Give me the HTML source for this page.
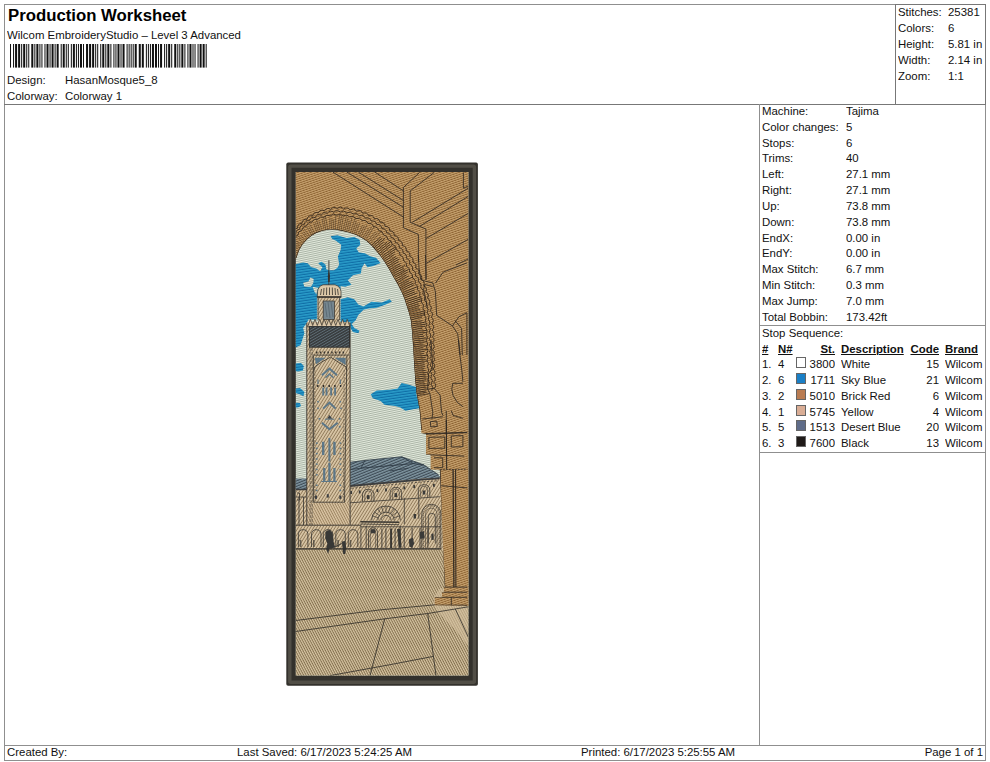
<!DOCTYPE html>
<html><head><meta charset="utf-8"><title>Production Worksheet</title>
<style>
html,body{margin:0;padding:0;background:#fff;}
body{width:990px;height:762px;position:relative;overflow:hidden;font-family:"Liberation Sans",sans-serif;font-size:11px;color:#111;}
.l{position:absolute;background:#8f8f8f;}
.t{position:absolute;white-space:nowrap;line-height:12px;height:12px;transform:scaleX(1.037);transform-origin:0 0;}
.r{text-align:right;transform-origin:100% 0;}
.h1{font-size:16px;font-weight:bold;line-height:18px;height:18px;color:#000;transform:scaleX(1.047);}
.b{font-weight:bold;text-decoration:underline;}
.sw{position:absolute;width:10px;height:11px;margin-top:-1px;border:1px solid #666;box-sizing:border-box;}
</style></head><body>
<!-- frame lines -->
<div class="l" style="left:4px;top:4px;width:982px;height:1px"></div>
<div class="l" style="left:4px;top:4px;width:1px;height:756px"></div>
<div class="l" style="left:985px;top:4px;width:1px;height:756px"></div>
<div class="l" style="left:4px;top:103.5px;width:982px;height:1px;background:#777"></div>
<div class="l" style="left:895px;top:4px;width:1px;height:100px;background:#777"></div>
<div class="l" style="left:895px;top:4px;width:91px;height:1px;background:#777"></div>
<div class="l" style="left:985px;top:4px;width:1px;height:100px;background:#777"></div>
<div class="l" style="left:759px;top:104px;width:1px;height:641px"></div>
<div class="l" style="left:759px;top:325px;width:226px;height:1px"></div>
<div class="l" style="left:759px;top:452px;width:226px;height:1px"></div>
<div class="l" style="left:4px;top:745px;width:982px;height:1px"></div>
<div class="l" style="left:4px;top:759.5px;width:982px;height:1px"></div>

<!-- header -->
<div class="t h1" style="left:8.3px;top:7px">Production Worksheet</div>
<div class="t" style="left:7px;top:29px">Wilcom EmbroideryStudio – Level 3 Advanced</div>
<svg style="position:absolute;left:10.3px;top:44.3px" width="196.7" height="23.6" viewBox="0 0 194 24" preserveAspectRatio="none" fill="#111"><rect x="0" y="0" width="1" height="24"/><rect x="3" y="0" width="1" height="24"/><rect x="5" y="0" width="2" height="24"/><rect x="8" y="0" width="2" height="24"/><rect x="11" y="0" width="1" height="24"/><rect x="13" y="0" width="2" height="24"/><rect x="16" y="0" width="1" height="24"/><rect x="18" y="0" width="1" height="24"/><rect x="21" y="0" width="2" height="24"/><rect x="24" y="0" width="1" height="24"/><rect x="26" y="0" width="2" height="24"/><rect x="29" y="0" width="1" height="24"/><rect x="31" y="0" width="1" height="24"/><rect x="34" y="0" width="1" height="24"/><rect x="36" y="0" width="2" height="24"/><rect x="39" y="0" width="1" height="24"/><rect x="41" y="0" width="2" height="24"/><rect x="44" y="0" width="1" height="24"/><rect x="46" y="0" width="2" height="24"/><rect x="50" y="0" width="1" height="24"/><rect x="52" y="0" width="2" height="24"/><rect x="55" y="0" width="1" height="24"/><rect x="57" y="0" width="1" height="24"/><rect x="60" y="0" width="1" height="24"/><rect x="62" y="0" width="2" height="24"/><rect x="65" y="0" width="1" height="24"/><rect x="67" y="0" width="1" height="24"/><rect x="69" y="0" width="2" height="24"/><rect x="72" y="0" width="1" height="24"/><rect x="75" y="0" width="2" height="24"/><rect x="78" y="0" width="2" height="24"/><rect x="81" y="0" width="2" height="24"/><rect x="84" y="0" width="1" height="24"/><rect x="86" y="0" width="1" height="24"/><rect x="89" y="0" width="1" height="24"/><rect x="91" y="0" width="2" height="24"/><rect x="94" y="0" width="1" height="24"/><rect x="96" y="0" width="2" height="24"/><rect x="99" y="0" width="1" height="24"/><rect x="102" y="0" width="1" height="24"/><rect x="104" y="0" width="1" height="24"/><rect x="106" y="0" width="2" height="24"/><rect x="109" y="0" width="1" height="24"/><rect x="111" y="0" width="2" height="24"/><rect x="115" y="0" width="1" height="24"/><rect x="117" y="0" width="1" height="24"/><rect x="119" y="0" width="1" height="24"/><rect x="121" y="0" width="1" height="24"/><rect x="123" y="0" width="2" height="24"/><rect x="127" y="0" width="2" height="24"/><rect x="130" y="0" width="2" height="24"/><rect x="134" y="0" width="1" height="24"/><rect x="136" y="0" width="1" height="24"/><rect x="138" y="0" width="1" height="24"/><rect x="140" y="0" width="2" height="24"/><rect x="143" y="0" width="2" height="24"/><rect x="146" y="0" width="1" height="24"/><rect x="148" y="0" width="2" height="24"/><rect x="152" y="0" width="1" height="24"/><rect x="154" y="0" width="1" height="24"/><rect x="156" y="0" width="2" height="24"/><rect x="159" y="0" width="1" height="24"/><rect x="162" y="0" width="2" height="24"/><rect x="165" y="0" width="1" height="24"/><rect x="167" y="0" width="1" height="24"/><rect x="169" y="0" width="2" height="24"/><rect x="172" y="0" width="1" height="24"/><rect x="175" y="0" width="1" height="24"/><rect x="177" y="0" width="2" height="24"/><rect x="180" y="0" width="1" height="24"/><rect x="182" y="0" width="1" height="24"/><rect x="185" y="0" width="1" height="24"/><rect x="187" y="0" width="2" height="24"/><rect x="190" y="0" width="2" height="24"/><rect x="193" y="0" width="1" height="24"/></svg>
<div class="t" style="left:7px;top:74px">Design:</div>
<div class="t" style="left:65px;top:74px">HasanMosque5_8</div>
<div class="t" style="left:7px;top:90px">Colorway:</div>
<div class="t" style="left:65px;top:90px">Colorway 1</div>

<!-- top-right stats -->
<div class="t" style="left:898px;top:6px">Stitches:</div><div class="t" style="left:948px;top:6px">25381</div>
<div class="t" style="left:898px;top:22px">Colors:</div><div class="t" style="left:948px;top:22px">6</div>
<div class="t" style="left:898px;top:38px">Height:</div><div class="t" style="left:948px;top:38px">5.81 in</div>
<div class="t" style="left:898px;top:54px">Width:</div><div class="t" style="left:948px;top:54px">2.14 in</div>
<div class="t" style="left:898px;top:70px">Zoom:</div><div class="t" style="left:948px;top:70px">1:1</div>

<!-- machine info -->
<div class="t" style="left:762px;top:105px">Machine:</div><div class="t" style="left:846px;top:105px">Tajima</div>
<div class="t" style="left:762px;top:121px">Color changes:</div><div class="t" style="left:846px;top:121px">5</div>
<div class="t" style="left:762px;top:137px">Stops:</div><div class="t" style="left:846px;top:137px">6</div>
<div class="t" style="left:762px;top:152px">Trims:</div><div class="t" style="left:846px;top:152px">40</div>
<div class="t" style="left:762px;top:168px">Left:</div><div class="t" style="left:846px;top:168px">27.1 mm</div>
<div class="t" style="left:762px;top:184px">Right:</div><div class="t" style="left:846px;top:184px">27.1 mm</div>
<div class="t" style="left:762px;top:200px">Up:</div><div class="t" style="left:846px;top:200px">73.8 mm</div>
<div class="t" style="left:762px;top:216px">Down:</div><div class="t" style="left:846px;top:216px">73.8 mm</div>
<div class="t" style="left:762px;top:232px">EndX:</div><div class="t" style="left:846px;top:232px">0.00 in</div>
<div class="t" style="left:762px;top:247px">EndY:</div><div class="t" style="left:846px;top:247px">0.00 in</div>
<div class="t" style="left:762px;top:263px">Max Stitch:</div><div class="t" style="left:846px;top:263px">6.7 mm</div>
<div class="t" style="left:762px;top:279px">Min Stitch:</div><div class="t" style="left:846px;top:279px">0.3 mm</div>
<div class="t" style="left:762px;top:295px">Max Jump:</div><div class="t" style="left:846px;top:295px">7.0 mm</div>
<div class="t" style="left:762px;top:311px">Total Bobbin:</div><div class="t" style="left:846px;top:311px">173.42ft</div>
<div class="t" style="left:762px;top:327px">Stop Sequence:</div>

<!-- stop sequence table -->
<div class="t b" style="left:762px;top:343px">#</div>
<div class="t b" style="left:778px;top:343px">N#</div>
<div class="t b r" style="left:805px;width:30px;top:343px">St.</div>
<div class="t b" style="left:841px;top:343px">Description</div>
<div class="t b r" style="left:900px;width:39px;top:343px">Code</div>
<div class="t b" style="left:945px;top:343px">Brand</div>

<div class="t" style="left:762px;top:358px">1.</div><div class="t" style="left:778px;top:358px">4</div><div class="sw" style="left:796px;top:358px;background:#ffffff"></div><div class="t r" style="left:805px;width:30px;top:358px">3800</div><div class="t" style="left:841px;top:358px">White</div><div class="t r" style="left:900px;width:39px;top:358px">15</div><div class="t" style="left:945px;top:358px">Wilcom</div>
<div class="t" style="left:762px;top:374px">2.</div><div class="t" style="left:778px;top:374px">6</div><div class="sw" style="left:796px;top:374px;background:#1a7fc6"></div><div class="t r" style="left:805px;width:30px;top:374px">1711</div><div class="t" style="left:841px;top:374px">Sky Blue</div><div class="t r" style="left:900px;width:39px;top:374px">21</div><div class="t" style="left:945px;top:374px">Wilcom</div>
<div class="t" style="left:762px;top:390px">3.</div><div class="t" style="left:778px;top:390px">2</div><div class="sw" style="left:796px;top:390px;background:#b97c52"></div><div class="t r" style="left:805px;width:30px;top:390px">5010</div><div class="t" style="left:841px;top:390px">Brick Red</div><div class="t r" style="left:900px;width:39px;top:390px">6</div><div class="t" style="left:945px;top:390px">Wilcom</div>
<div class="t" style="left:762px;top:406px">4.</div><div class="t" style="left:778px;top:406px">1</div><div class="sw" style="left:796px;top:406px;background:#d9ad95"></div><div class="t r" style="left:805px;width:30px;top:406px">5745</div><div class="t" style="left:841px;top:406px">Yellow</div><div class="t r" style="left:900px;width:39px;top:406px">4</div><div class="t" style="left:945px;top:406px">Wilcom</div>
<div class="t" style="left:762px;top:421px">5.</div><div class="t" style="left:778px;top:421px">5</div><div class="sw" style="left:796px;top:421px;background:#5f6c89"></div><div class="t r" style="left:805px;width:30px;top:421px">1513</div><div class="t" style="left:841px;top:421px">Desert Blue</div><div class="t r" style="left:900px;width:39px;top:421px">20</div><div class="t" style="left:945px;top:421px">Wilcom</div>
<div class="t" style="left:762px;top:437px">6.</div><div class="t" style="left:778px;top:437px">3</div><div class="sw" style="left:796px;top:437px;background:#1f1a18"></div><div class="t r" style="left:805px;width:30px;top:437px">7600</div><div class="t" style="left:841px;top:437px">Black</div><div class="t r" style="left:900px;width:39px;top:437px">13</div><div class="t" style="left:945px;top:437px">Wilcom</div>

<!-- footer -->
<div class="t" style="left:7px;top:746px">Created By:</div>
<div class="t" style="left:237px;top:746px">Last Saved: 6/17/2023 5:24:25 AM</div>
<div class="t" style="left:581px;top:746px">Printed: 6/17/2023 5:25:55 AM</div>
<div class="t r" style="left:880px;width:103px;top:746px">Page 1 of 1</div>

<!-- design -->
<svg style="position:absolute;left:280px;top:155px" width="210" height="540" viewBox="280 155 210 540">
<defs>
<pattern id="pBrown" width="8" height="2.1" patternUnits="userSpaceOnUse" patternTransform="rotate(-19)"><rect width="8" height="2.1" fill="#c7a370"/><rect y="1.2" width="8" height="0.9" fill="#8c6232"/></pattern>
<pattern id="pSky" width="8" height="2" patternUnits="userSpaceOnUse" patternTransform="rotate(-12)"><rect width="8" height="2" fill="#e3eadd"/><rect y="1.1" width="8" height="0.9" fill="#a5afa1"/></pattern>
<pattern id="pBlue" width="8" height="2.6" patternUnits="userSpaceOnUse" patternTransform="rotate(-8)"><rect width="8" height="2.6" fill="#2a9cc9"/><rect y="1.5" width="8" height="1.1" fill="#0f6ea6"/></pattern>
<pattern id="pFloor" width="2.2" height="8" patternUnits="userSpaceOnUse" patternTransform="rotate(-28)"><rect width="2.2" height="8" fill="#d6c5a3"/><rect x="1.2" width="1" height="8" fill="#84704f"/></pattern>
<pattern id="pWall" width="2.6" height="8" patternUnits="userSpaceOnUse" patternTransform="rotate(32)"><rect width="2.6" height="8" fill="#dcc9a9"/><rect x="1.6" width="1" height="8" fill="#917b5b"/></pattern>
<pattern id="pWall2" width="2.3" height="8" patternUnits="userSpaceOnUse" patternTransform="rotate(-28)"><rect width="2.3" height="8" fill="#dcc7a6"/><rect x="1.3" width="1" height="8" fill="#9c8461"/></pattern>
<pattern id="pRoof" width="8" height="2.5" patternUnits="userSpaceOnUse" patternTransform="rotate(-22)"><rect width="8" height="2.5" fill="#8197a2"/><rect y="1.4" width="8" height="1.1" fill="#3d4a54"/></pattern>
<pattern id="pBand" width="8" height="2.4" patternUnits="userSpaceOnUse" patternTransform="rotate(-30)"><rect width="8" height="2.4" fill="#393d3f"/><rect y="1.6" width="8" height="0.8" fill="#5f6e76"/></pattern>
<clipPath id="cIn"><rect x="295.8" y="172" width="172.6" height="503.6"/></clipPath>

<clipPath id="cBrown"><path d="M295.0,171.0 L470.0,171.0 L470.0,606.0 L434.7,605.2 L434.7,597.3 L442.0,597.3 L442.0,592.2 L444.0,592.2 L444.0,587.1 L444.8,587.1 L439.8,470.0 L430.6,469.5 L430.6,455.0 L426.0,454.5 L426.0,434.0 L421.3,433.0 L421.3,430.0 L420.5,420.0 L419.5,409.4 L418.0,401.0 L416.5,392.8 L415.4,382.0 L414.8,373.0 L414.1,363.5 L413.5,353.0 L412.8,342.5 L412.0,331.0 L410.8,320.2 L409.0,313.0 L406.9,306.4 L404.5,299.0 L401.6,292.0 L397.8,284.5 L393.7,277.5 L389.0,269.0 L384.5,261.8 L380.0,255.5 L375.4,250.0 L371.0,245.0 L366.2,240.8 L361.0,237.5 L355.7,234.8 L349.0,232.5 L342.5,230.9 L336.0,229.8 L329.4,229.6 L322.5,230.8 L316.3,232.9 L311.5,235.7 L307.0,239.4 L302.5,244.5 L299.2,250.0 L296.3,258.0 L294.5,262.0 Z"/></clipPath>
</defs>
<rect x="286.3" y="162.6" width="191.6" height="523.2" rx="1.8" fill="#33312c"/>
<rect x="289.8" y="166.1" width="184.6" height="516.2" rx="1" fill="none" stroke="#514e46" stroke-width="3.4"/>
<g clip-path="url(#cIn)">
<rect x="295" y="171" width="175" height="506" fill="url(#pSky)"/>
<g fill="url(#pBlue)">
<path d="M330.7,236.2 L337.3,235.2 L346.5,238.1 L354.3,237.1 L359.6,239.7 L360.3,244.7 L356.3,248.6 L358.9,252.6 L364.8,253.2 L370.1,256.3 L376.0,257.8 L380.6,263.1 L374.0,265.7 L367.5,267.3 L364.6,263.3 L361.6,268.3 L360.9,273.6 L353.0,275.2 L347.8,280.2 L351.5,284.7 L345.2,286.7 L340.6,286.1 L340.6,293.3 L329.4,293.3 L329.4,270.3 L334.0,270.3 L337.5,267.7 L339.2,264.4 L337.9,256.5 L340.6,249.9 L341.2,244.7 L336.0,240.8 L332.0,238.8 Z"/>
<path d="M294.6,264.4 L303.1,262.4 L307.7,263.3 L311.0,267.0 L316.3,268.6 L320.2,271.2 L322.4,267.3 L318.2,263.3 L321.5,261.8 L325.5,264.4 L326.4,269.6 L329.4,270.3 L329.4,293.3 L316.9,295.9 L316.9,319.5 L308.4,319.5 L307.0,322.8 L303.1,328.1 L304.4,333.3 L300.5,345.2 L295.0,347.8 Z"/>
<path d="M340.6,299.2 L347.8,297.2 L354.3,299.2 L358.3,304.4 L363.5,306.4 L371.4,301.8 L381.9,302.5 L389.8,299.2 L391.8,301.8 L384.5,305.1 L376.7,307.7 L368.8,308.4 L363.5,309.7 L358.3,315.0 L355.7,320.2 L351.7,324.1 L354.3,328.1 L359.6,330.7 L358.3,333.3 L353.0,332.0 L350.4,328.1 L349.8,322.8 L340.6,322.0 Z"/>
<path d="M370.8,394.3 L376.7,390.4 L389.8,389.7 L397.7,388.4 L401.6,383.1 L408.2,384.4 L416.0,387.0 L416.7,396.3 L419.4,402.8 L421.0,408.0 L412.1,409.4 L405.6,410.7 L400.3,407.4 L395.0,406.1 L384.5,404.8 L380.6,400.9 L372.7,398.2 Z"/>
<path d="M295,363.5 L301,363 L303.8,366 L303,370.5 L298,371.4 L295,371 Z"/>
<path d="M295,388.4 L300,388 L304.4,392 L303.5,396.3 L299,394 L295,393 Z"/>
<path d="M295,402.8 L300,403 L301,406 L298,407.4 L295,407.4 Z"/>
</g>
<g fill="url(#pSky)">
<path d="M303.1,282.8 L308.4,281.5 L310.4,277.5 L313.6,278.8 L313.4,282.8 L311.0,286.7 L304.4,286.7 Z"/>
<path d="M312.6,286.7 L318.2,287.8 L316.3,294.6 L314.3,291.3 Z"/>
</g>
<path d="M349.8,462.3 L365,460.4 L401.7,456.8 L424,465 L438.5,474.8 L441,478 L424,478.7 L349.8,486 Z" fill="url(#pRoof)"/>
<path d="M295,478.5 L307,478.5 L307,490 L295,490 Z" fill="url(#pRoof)"/>
<path d="M295,489 L349,489 L349,485.5 L424,478.5 L446,477.6 L446,551 L295,551 Z" fill="url(#pWall)"/>
<rect x="295" y="549.5" width="175" height="128" fill="url(#pFloor)"/>
<path d="M440.6,587.5 L434.2,596.7 L433.3,605 L440.6,615 L453.5,628 L462.6,639 L468.5,646.3 L468.5,606.8 Z" fill="#d3c09f" opacity="0.6"/>
<g id="building" fill="none" stroke="#3a3732" stroke-width="0.8">
<path d="M349.8,462.3 L365,460.4 L401.7,456.8 L424,465 L438.5,474.8" stroke="#2f3b46" stroke-width="0.8"/>
<path d="M364.9,460.4 L361.0,468.2 L350.5,469.5" stroke="#2f3b46" stroke-width="0.8"/>
<path d="M361.0,468.2 L413.5,463.6 L424.0,464.9" stroke="#2f3b46" stroke-width="0.9"/>
<path d="M401.7,456.8 L413.5,463.6" stroke="#2f3b46" stroke-width="0.8"/>
<path d="M389.9,470.9 L408.3,468.2" stroke="#2f3b46" stroke-width="0.8"/>
<path d="M349.8,486.0 L424.0,479.4 L439.5,478.3" stroke="#3b3d3f" stroke-width="1.8"/>
<path d="M295,489.5 L307,489.5" stroke="#3b3d3f" stroke-width="1.6"/>
<path d="M351.2,488.3 L424.0,481.8 L439.1,480.7" stroke-width="0.7" stroke-dasharray="2.2 1.8"/>
<path d="M362.5,501.6 L362.5,494.3 A5.8,5.8 0 0 1 374.0,494.3 L374.0,501.6"/><path d="M364.8,501.6 L364.8,494.3 A3.4,3.4 0 0 1 371.7,494.3 L371.7,501.6" stroke-width="0.6"/>
<rect x="366.9" y="495.1" width="2.6" height="4" fill="#3a3a38" stroke="none"/>
<path d="M390.1,499.6 L390.1,492.4 A5.8,5.8 0 0 1 401.6,492.4 L401.6,499.6"/><path d="M392.4,499.6 L392.4,492.4 A3.4,3.4 0 0 1 399.3,492.4 L399.3,499.6" stroke-width="0.6"/>
<rect x="394.5" y="493.1" width="2.6" height="4" fill="#3a3a38" stroke="none"/>
<path d="M418.3,497.0 L418.3,489.7 A5.8,5.8 0 0 1 429.8,489.7 L429.8,497.0"/><path d="M420.6,497.0 L420.6,489.7 A3.4,3.4 0 0 1 427.5,489.7 L427.5,497.0" stroke-width="0.6"/>
<rect x="422.7" y="490.5" width="2.6" height="4" fill="#3a3a38" stroke="none"/>
<rect x="350.3" y="491.0" width="1.8" height="3" fill="#3a3a38" stroke="none"/>
<rect x="358.8" y="490.4" width="1.8" height="3" fill="#3a3a38" stroke="none"/>
<rect x="376.5" y="489.1" width="1.8" height="3" fill="#3a3a38" stroke="none"/>
<rect x="385.1" y="488.4" width="1.8" height="3" fill="#3a3a38" stroke="none"/>
<rect x="403.4" y="486.4" width="1.8" height="3" fill="#3a3a38" stroke="none"/>
<rect x="413.3" y="485.1" width="1.8" height="3" fill="#3a3a38" stroke="none"/>
<rect x="433.0" y="483.8" width="1.8" height="3" fill="#3a3a38" stroke="none"/>
<path d="M349.8,502.8 L439.8,496.7"/>
<path d="M404.3,497.8 L404.3,524.0"/>
<path d="M418.8,497.1 L418.8,518.8"/>
<path d="M371.6,520.4 A14.4,14.4 0 0 1 400.4,520.4"/>
<path d="M377.8,520.4 A8.2,8.2 0 0 1 394.2,520.4"/>
<path d="M381.0,520.4 A5.0,5.0 0 0 1 391.0,520.4"/>
<path d="M378.2,517.8 L372.3,515.9" stroke-width="0.7"/>
<path d="M379.3,515.5 L374.3,511.9" stroke-width="0.7"/>
<path d="M381.1,513.7 L377.5,508.7" stroke-width="0.7"/>
<path d="M383.4,512.6 L381.5,506.7" stroke-width="0.7"/>
<path d="M386.0,512.2 L386.0,506.0" stroke-width="0.7"/>
<path d="M388.5,512.6 L390.4,506.7" stroke-width="0.7"/>
<path d="M390.8,513.7 L394.4,508.7" stroke-width="0.7"/>
<path d="M392.6,515.5 L397.6,511.9" stroke-width="0.7"/>
<path d="M393.8,517.8 L399.7,515.9" stroke-width="0.7"/>
<path d="M360.4,521.7 L399.1,522.3" stroke-width="1.5"/>
<path d="M360.4,524.0 L399.1,524.7"/>
<rect x="413.6" y="514.0" width="2.4" height="4.5" fill="#3a3a38" stroke="none"/>
<path d="M421.8,548.3 L421.8,513.8 A9.5,9.5 0 0 1 440.8,513.8 L440.8,548.3"/><path d="M425.6,548.3 L425.6,513.8 A5.7,5.7 0 0 1 437.0,513.8 L437.0,548.3" stroke-width="0.6"/>
<path d="M423.3,548.3 L423.3,513.8 A8.0,8.0 0 0 1 439.3,513.8 L439.3,548.3" stroke-width="0.9" stroke-dasharray="1 1"/>
<path d="M428.3,543.3 L428.3,516.8 A3.5,3.5 0 0 1 435.3,516.8 L435.3,543.3"/>
<path d="M295,548.8 L441,548.8" stroke-width="0.9"/>
<path d="M361,526.8 L441,526.8" stroke-width="0.8"/>
<path d="M298.4,547.1 L298.4,533.8 A4.8,4.8 0 0 1 307.9,533.8 L307.9,547.1"/>
<path d="M300.6,540.1 L300.6,547.1" stroke-width="1.6" opacity="0.7"/>
<path d="M311.5,547.1 L311.5,533.8 A4.8,4.8 0 0 1 321.0,533.8 L321.0,547.1"/>
<path d="M313.8,540.1 L313.8,547.1" stroke-width="1.6" opacity="0.7"/>
<path d="M335.8,547.1 L335.8,533.8 A4.8,4.8 0 0 1 345.3,533.8 L345.3,547.1"/>
<path d="M338.1,540.1 L338.1,547.1" stroke-width="1.6" opacity="0.7"/>
<path d="M348.3,547.1 L348.3,533.8 A4.8,4.8 0 0 1 357.8,533.8 L357.8,547.1"/>
<path d="M350.5,540.1 L350.5,547.1" stroke-width="1.6" opacity="0.7"/>
<path d="M323.3,547.1 L323.3,533.8 A4.8,4.8 0 0 1 332.8,533.8 L332.8,547.1"/>
<path d="M325.5,531.7 L329.4,529.7 L332.7,533.0 L333.3,540.9 L335.3,547.5 L329.4,548.8 L328.1,554.0 L326.1,548.8 L327.4,543.5 L325.2,538.3 Z" fill="#383836" stroke="none"/>
<path d="M341.9,541.6 L345.2,540.9 L346.2,547.5 L345.2,554.0 L343.2,554.0 L342.5,547.5 Z" fill="#383836" stroke="none"/>
<path d="M335.3,546.8 L341.9,543.5" stroke-width="1"/>
<path d="M360.9,525.8 L360.9,548.8"/>
<path d="M366.2,525.8 L366.2,548.8"/>
<path d="M400.3,525.8 L400.3,548.8"/>
<path d="M368.5,547.8 L368.5,532.3 A4.5,4.5 0 0 1 377.5,532.3 L377.5,547.8"/><path d="M370.3,547.8 L370.3,532.3 A2.7,2.7 0 0 1 375.7,532.3 L375.7,547.8" stroke-width="0.6"/>
<rect x="370.8" y="529.3" width="4.5" height="4" fill="#3a3a38" stroke="none"/>
<path d="M381.9,528.4 L381.9,548.1" stroke-width="0.9"/>
<path d="M385.9,528.4 L385.9,548.1" stroke-width="0.9"/>
<path d="M391.1,528.4 L391.1,548.1" stroke-width="2"/>
<path d="M395.1,528.4 L395.1,548.1" stroke-width="0.9"/>
<path d="M399.0,528.4 L399.0,548.1" stroke-width="0.9"/>
<path d="M397.0,529.1 L400.3,529.1 L401.6,547.5 L399.0,547.5 Z" fill="#383836" stroke="none"/>
<path d="M404.2,527.8 L404.2,548.1" stroke-width="0.9"/>
<path d="M412.1,527.8 L412.1,548.1" stroke-width="0.9"/>
<path d="M420.0,527.8 L420.0,548.1" stroke-width="0.9"/>
<path d="M427.9,527.8 L427.9,548.1" stroke-width="0.9"/>
<path d="M408.8,539.6 L412.8,537.6 L414.1,543.5 L412.1,547.5 L409.5,546.8 Z" fill="#3a3a38" stroke="none"/>
<path d="M419.8,531.9 L424.0,531.3 L424.7,538.5 L420.1,538.7 Z" fill="#3a3a38" stroke="none"/>
<path d="M431.4,533.9 L433.5,533.2 L433.8,539.8 L431.4,540.1 Z" fill="#3a3a38" stroke="none"/>
<path d="M295,497 L306,497 M299,497 L299,525 M303.5,497 L303.5,525"/>
<path d="M297,493 L299.5,493 L299.5,500 L297,500" />
</g>
<g id="tower">
<rect x="306.8" y="322" width="43.4" height="203" fill="url(#pWall)"/>
<rect x="306.8" y="503" width="43.4" height="22.5" fill="url(#pWall2)"/>
<rect x="318" y="297" width="21.7" height="30" fill="url(#pWall)"/>
<path d="M317.3,297 L317.5,291.5 Q318,286.5 323,284.8 L335,284.8 Q340.5,286.5 341,291.5 L341,297 Z" fill="#dbc7a7" stroke="#34312c" stroke-width="0.7"/>
<path d="M320.5,295 L321.5,289 M323.5,295 L324,288 M326.5,295 L326.7,287.5 M329.5,295 L329.5,287.5 M332.5,295 L332.3,287.5 M335.5,295 L335,288 M338.3,295 L337.5,289" stroke="#34312c" stroke-width="0.8" fill="none"/>
<path d="M316.8,297 L341.3,297" stroke="#34312c" stroke-width="1.4"/>
<path d="M328.9,260.3 L328.9,285" stroke="#34312c" stroke-width="0.9"/>
<path d="M328.9,270 L330,276 L329.6,282 L328.2,282 L327.8,276 Z" fill="#34312c"/>
<path d="M318,297.7 L318,320 M339.7,297.7 L339.7,320" stroke="#34312c" stroke-width="0.8" fill="none"/>
<rect x="323.2" y="301" width="11.2" height="18.4" fill="#75868f" stroke="#34312c" stroke-width="0.7"/>
<path d="M325,303 L327,317 M328,302 L330,318 M331,302 L333,317" stroke="#56646e" stroke-width="0.8" fill="none"/>
<path d="M308.1,325.5 L310.4,319.3 L312.7,325.5 L315.0,319.3 L317.3,325.5 L319.6,319.3 L321.9,325.5 L324.2,319.3 L326.5,325.5 L328.8,319.3 L331.1,325.5 L333.4,319.3 L335.7,325.5 L338.0,319.3 L340.3,325.5 L342.6,319.3 L344.9,325.5 L347.2,319.3 L349.5,325.5 L349.5,327.0 L308.1,327.0 Z" fill="#dbc7a7" stroke="#34312c" stroke-width="0.7"/>
<rect x="309.4" y="326.6" width="40.1" height="20.6" fill="url(#pBand)"/>
<rect x="309.4" y="326.6" width="40.1" height="20.6" fill="none" stroke="#2c2e2f" stroke-width="0.9"/>
<path d="M306.8,323 L306.8,525 M350.1,323 L350.1,525" stroke="#34312c" stroke-width="0.9" fill="none"/>
<path d="M310.1,348 L310.1,525 M312.1,348 L312.1,525" stroke="#34312c" stroke-width="0.7" stroke-dasharray="3 0.8" fill="none" opacity="0.8"/>
<path d="M316,352.5 L346,352.5" stroke="#34312c" stroke-width="2.2" stroke-dasharray="1.5 2.3"/>
<path d="M312.5,355.1 L349.5,355.1" stroke="#34312c" stroke-width="0.8"/>
<path d="M313.4,356 L313.4,502.2 L344.5,502.2 L346.9,356" stroke="#34312c" stroke-width="0.8" fill="none"/>
<path d="M314.8,370 L314.8,500.8 M344.2,370 L343.4,500.8" stroke="#34312c" stroke-width="0.6" stroke-dasharray="2.5 1" fill="none" opacity="0.8"/>
<path d="M314.7,357.7 L325.9,357.7 L316.0,364.3 Z" fill="#5c7788"/>
<path d="M334.4,357.7 L345.6,357.7 L345.6,365.0 Z" fill="#5c7788"/>
<path d="M314.0,370.2 L314.7,366.9 L321.3,362.3 L330.5,357.1 L339.7,363.0 L346.0,366.9 L346.5,370.2" fill="none" stroke="#34312c" stroke-width="0.8"/>
<g fill="none" stroke="#5c7788" stroke-width="2">
<path d="M321.9,375.2 L329.4,368.6 L337.0,375.2"/>
<path d="M325.5,377.8 L329.4,373.9 L333.6,377.8" stroke-width="1.4"/>
<path d="M323.2,408.6 L329.4,402.6 L335.7,408.6"/>
<path d="M321.9,422.7 L329.4,429.3 L337.7,422.7"/>
</g>
<path d="M317.1,386.0 L342.3,386.0" stroke="#2a2a2a" stroke-width="2" stroke-dasharray="1.4 4.3" fill="none"/>
<path d="M323.2,387.5 L323.2,395.4" stroke="#5c7788" stroke-width="1.8"/>
<path d="M326.5,387.5 L326.5,395.4" stroke="#5c7788" stroke-width="1.8"/>
<path d="M331.1,387.5 L331.1,395.4" stroke="#5c7788" stroke-width="1.8"/>
<path d="M335.1,387.5 L335.1,395.4" stroke="#5c7788" stroke-width="1.8"/>
<path d="M318.0,379.4 L318.0,384.0" stroke="#5c7788" stroke-width="1.2"/>
<path d="M340.3,379.4 L340.3,384.0" stroke="#5c7788" stroke-width="1.2"/>
<rect x="317.2" y="400.9" width="1.6" height="1.6" fill="#5c7788"/>
<rect x="339.5" y="400.9" width="1.6" height="1.6" fill="#5c7788"/>
<rect x="317.2" y="407.5" width="1.6" height="1.6" fill="#5c7788"/>
<rect x="340.2" y="407.5" width="1.6" height="1.6" fill="#5c7788"/>
<rect x="338.9" y="418.0" width="1.6" height="1.6" fill="#5c7788"/>
<rect x="338.9" y="425.9" width="1.6" height="1.6" fill="#5c7788"/>
<rect x="318.5" y="418.0" width="1.6" height="1.6" fill="#5c7788"/>
<path d="M327.2,418.8 L329.4,414.9 L332.4,418.8 Z" fill="#3a4148"/>
<path d="M324.9,419.2 L334.4,419.2" stroke="#5c7788" stroke-width="1"/>
<path d="M323.2,441.8 L323.2,455.0" stroke="#5c7788" stroke-width="2.4"/>
<path d="M329.4,437.9 L329.4,461.5" stroke="#5c7788" stroke-width="2.0"/>
<path d="M334.4,441.8 L334.4,455.0" stroke="#5c7788" stroke-width="2.4"/>
<path d="M324.2,468.1 L324.2,481.2" stroke="#5c7788" stroke-width="2.2"/>
<path d="M329.4,462.8 L329.4,481.2" stroke="#5c7788" stroke-width="2.2"/>
<path d="M334.4,468.1 L334.4,481.2" stroke="#5c7788" stroke-width="2.2"/>
<path d="M321.3,481.5 L337.0,481.5" stroke="#5c7788" stroke-width="1.2" fill="none"/>
<rect x="315.9" y="442.4" width="1.7" height="1.5" fill="#5c7788"/>
<rect x="339.5" y="442.4" width="1.7" height="1.5" fill="#5c7788"/>
<rect x="315.9" y="447.7" width="1.7" height="1.5" fill="#5c7788"/>
<rect x="339.5" y="447.7" width="1.7" height="1.5" fill="#5c7788"/>
<rect x="315.9" y="452.9" width="1.7" height="1.5" fill="#5c7788"/>
<rect x="339.5" y="452.9" width="1.7" height="1.5" fill="#5c7788"/>
<rect x="315.9" y="458.2" width="1.7" height="1.5" fill="#5c7788"/>
<rect x="339.5" y="458.2" width="1.7" height="1.5" fill="#5c7788"/>
<rect x="315.9" y="463.4" width="1.7" height="1.5" fill="#5c7788"/>
<rect x="339.5" y="463.4" width="1.7" height="1.5" fill="#5c7788"/>
<rect x="315.9" y="468.7" width="1.7" height="1.5" fill="#5c7788"/>
<rect x="339.5" y="468.7" width="1.7" height="1.5" fill="#5c7788"/>
<rect x="315.9" y="474.0" width="1.7" height="1.5" fill="#5c7788"/>
<rect x="339.5" y="474.0" width="1.7" height="1.5" fill="#5c7788"/>
<rect x="315.9" y="484.5" width="1.7" height="1.5" fill="#5c7788"/>
<rect x="339.5" y="484.5" width="1.7" height="1.5" fill="#5c7788"/>
<rect x="315.9" y="489.7" width="1.7" height="1.5" fill="#5c7788"/>
<rect x="339.5" y="489.7" width="1.7" height="1.5" fill="#5c7788"/>
<rect x="315.0" y="495.5" width="2" height="3.4" fill="#3d3f42"/>
<rect x="326.8" y="494.2" width="2" height="3.4" fill="#3d3f42"/>
<rect x="339.3" y="495.5" width="2" height="3.4" fill="#3d3f42"/>
<path d="M295,525.2 L361,525.2" stroke="#34312c" stroke-width="0.9"/>
</g>
<g clip-path="url(#cBrown)">
<rect x="295" y="171" width="175" height="506" fill="url(#pBrown)"/>
<path d="M295.1,260.2 L289.2,257.5 M296.0,258.5 L289.0,255.4 M296.3,256.6 L289.7,254.2 M296.8,254.8 L291.6,252.9 M297.6,253.0 L292.2,251.1 M298.6,251.4 L292.7,249.3 M298.6,249.1 L293.0,245.8 M300.2,247.9 L294.6,244.5 M300.4,245.8 L294.0,242.0 M301.9,244.5 L294.9,240.3 M303.5,243.3 L295.9,236.6 M304.5,241.7 L297.3,235.3 M306.0,240.4 L300.3,235.4 M306.8,238.3 L302.0,232.6 M308.4,237.3 L303.6,231.6 M310.0,236.3 L303.9,228.8 M311.8,235.5 L306.8,226.9 M313.3,234.3 L309.3,227.4 M314.8,233.2 L309.5,224.0 M316.6,232.1 L313.6,223.5 M318.5,231.8 L315.2,222.1 M320.1,230.7 L316.4,219.8 M322.0,230.3 L318.9,221.2 M323.9,229.5 L322.0,218.9 M325.8,229.9 L323.7,217.4 M327.8,229.7 L325.3,215.6 M329.7,228.7 L330.0,217.6 M331.6,229.1 L331.9,218.8 M333.5,228.9 L333.8,219.2 M335.4,229.1 L335.8,215.2 M337.3,229.6 L339.8,214.9 M339.2,229.6 L341.5,216.0 M341.1,230.1 L343.3,216.8 M343.1,229.9 L346.6,215.9 M344.9,230.7 L348.0,218.2 M346.7,231.1 L349.3,220.8 M348.7,231.2 L351.9,218.0 M350.3,232.6 L355.3,217.9 M352.3,232.8 L356.4,220.8 M354.0,233.6 L357.5,223.4 M355.6,234.6 L359.6,223.2 M357.7,234.8 L362.6,225.2 M359.1,236.2 L364.5,225.7 M361.1,236.4 L366.9,225.2 M362.6,237.9 L368.7,228.3 M364.5,238.4 L371.7,227.0 M366.1,239.5 L374.2,226.6 M367.3,241.1 L375.7,231.6 M369.1,242.0 L377.4,232.5 M370.0,243.9 L381.2,231.1" fill="none" stroke="#2a2018" stroke-opacity="0.5" stroke-width="0.8"/>
<path d="M371.5,245.1 L380.8,236.9 M373.0,246.3 L382.3,238.1 M374.0,247.9 L385.2,238.1 M375.4,249.2 L383.9,241.8 M376.8,250.6 L387.0,242.1 M378.1,252.0 L390.9,241.3 M379.3,253.5 L390.1,244.4 M380.0,255.4 L392.1,245.2 M381.8,256.4 L395.1,246.9 M382.9,257.9 L396.1,248.5 M383.6,259.8 L394.9,251.7 M385.0,261.1 L394.6,254.3 M385.4,263.1 L395.9,256.6 M386.5,264.7 L397.6,257.7 M387.4,266.4 L399.3,258.9 M388.5,267.9 L398.6,261.6 M389.7,269.4 L400.5,263.5 M391.2,270.8 L400.9,265.4 M391.4,272.9 L404.9,265.4 M392.5,274.4 L403.9,268.1 M393.2,276.2 L405.3,269.5 M395.0,277.3 L408.5,269.4 M395.4,279.3 L407.5,272.2 M396.0,281.2 L406.5,275.0 M397.1,282.7 L408.7,275.9 M398.0,284.4 L412.5,277.1 M399.7,285.7 L409.1,280.9 M399.7,287.8 L412.5,281.3 M400.4,289.6 L413.4,283.0 M402.3,290.8 L414.1,284.7 M402.8,292.7 L417.1,286.8 M403.2,294.6 L414.6,289.9 M404.3,296.2 L414.8,291.9 M405.1,297.9 L417.3,292.8 M405.1,300.0 L417.2,296.1 M406.6,301.5 L420.3,297.1 M406.9,303.4 L421.0,298.8 M407.5,305.2 L421.3,300.7 M407.8,307.1 L418.7,303.6 M407.8,309.1 L419.9,305.3 M408.7,310.8 L418.7,307.6 M409.7,312.5 L420.4,309.1 M409.9,314.4 L424.6,310.8 M411.0,316.1 L424.8,312.7 M410.7,318.2 L425.3,314.5 M411.0,320.0 L421.9,317.3 M411.2,322.0 L422.3,320.7 M412.3,323.8 L424.6,322.4 M412.0,325.7 L425.8,324.2 M412.6,327.5 L425.0,326.2 M412.6,329.5 L422.3,328.4 M413.0,331.4 L426.6,330.4 M412.7,333.3 L425.9,332.4 M413.2,335.2 L423.1,334.5 M413.4,337.1 L424.0,336.3 M413.0,339.0 L427.2,338.0 M413.8,340.8 L424.5,340.1 M413.0,342.8 L426.1,341.9 M413.1,344.7 L423.3,344.0 M414.0,346.5 L427.1,345.7 M414.2,348.4 L423.5,347.8 M414.1,350.3 L427.6,349.4 M414.1,352.2 L424.6,351.5 M413.6,354.2 L423.7,353.6 M414.5,356.0 L427.7,355.3 M414.9,357.9 L425.7,357.3 M414.9,359.8 L425.3,359.2 M414.3,361.8 L427.3,361.0 M414.5,363.6 L424.6,362.9 M415.0,365.5 L424.7,364.8 M414.9,367.4 L424.9,366.7 M415.6,369.3 L424.4,368.6 M415.2,371.2 L425.5,370.4 M415.9,373.1 L426.7,372.3 M416.0,375.0 L426.1,374.3 M415.7,376.9 L426.5,376.2 M415.2,378.8 L426.7,378.1 M415.5,380.7 L426.4,380.0 M416.4,382.5 L424.5,381.7 M416.2,384.4 L425.5,383.5 M416.5,386.3 L428.1,385.1 M416.7,388.2 L426.5,387.2 M417.2,390.1 L427.7,389.0 M417.1,392.0 L425.8,391.1 M417.0,393.9 L426.6,392.1 M417.7,395.7 L429.3,393.6" fill="none" stroke="#241b14" stroke-opacity="0.8" stroke-width="0.9"/>
<path d="M294.5,262.0 L296.3,258.0 L299.2,250.0 L302.5,244.5 L307.0,239.4 L311.5,235.7 L316.3,232.9 L322.5,230.8 L329.4,229.6 L336.0,229.8 L342.5,230.9 L349.0,232.5 L355.7,234.8 L361.0,237.5 L366.2,240.8 L371.0,245.0 L375.4,250.0 L380.0,255.5 L384.5,261.8 L389.0,269.0 L393.7,277.5 L397.8,284.5 L401.6,292.0 L404.5,299.0 L406.9,306.4 L409.0,313.0 L410.8,320.2 L412.0,331.0 L412.8,342.5 L413.5,353.0 L414.1,363.5 L414.8,373.0 L415.4,382.0 L416.5,392.8 L418.0,401.0 L419.5,409.4 L420.5,420.0 L421.3,430.0" fill="none" stroke="#2a2018" stroke-width="1.2"/>
<path d="M287.4,258.8 Q286.0,254.9 289.5,252.7 Q288.0,248.8 291.4,246.5 Q290.5,242.4 294.2,240.6 Q293.8,236.5 297.8,235.2 Q297.9,231.0 301.9,230.2 Q302.6,226.1 306.7,225.8 Q307.9,221.8 312.0,222.1 Q313.8,218.3 317.9,219.3 Q320.1,215.8 324.0,217.2 Q326.6,213.9 330.3,215.8 Q333.4,212.9 336.8,215.2 Q340.3,212.9 343.3,215.8 Q346.9,213.8 349.7,216.9 Q353.5,215.2 356.0,218.5 Q359.9,217.0 362.1,220.5 Q366.2,219.6 368.0,223.4 Q372.1,222.8 373.6,226.7 Q377.7,226.5 378.8,230.6 Q382.9,230.8 383.6,234.9 Q387.7,235.5 388.0,239.7 Q392.1,240.4 392.3,244.6 Q396.3,245.6 396.2,249.8 Q400.2,250.9 399.9,255.1 Q403.9,256.4 403.4,260.5 Q407.2,262.2 406.4,266.3 Q410.2,268.0 409.4,272.1 Q413.2,273.8 412.4,277.8 Q416.2,279.7 415.2,283.7 Q418.8,285.8 417.6,289.8 Q421.1,292.0 419.7,295.9 Q423.0,298.4 421.4,302.2 Q424.7,304.7 423.0,308.5 Q426.2,311.1 424.3,314.8 Q427.4,317.7 425.2,321.3 Q428.1,324.3 425.7,327.8 Q428.5,330.9 426.1,334.2 Q428.8,337.4 426.3,340.7 Q429.0,343.9 426.5,347.2 Q429.2,350.4 426.7,353.7 Q429.4,356.9 427.0,360.2 Q429.7,363.4 427.3,366.7 Q430.0,369.8 427.6,373.2 Q430.3,376.3 427.9,379.7 Q430.7,382.7 428.4,386.2" fill="none" stroke="#2a2018" stroke-width="0.8"/>
<path d="M285.8,258.1 Q283.9,254.1 287.8,251.9 Q285.9,247.9 289.7,245.7 Q288.3,241.5 292.4,239.8 Q291.5,235.4 295.8,234.3 Q295.4,229.9 299.7,229.1 Q299.9,224.7 304.3,224.5 Q305.1,220.1 309.5,220.6 Q310.9,216.4 315.2,217.5 Q317.0,213.5 321.2,215.0 Q323.4,211.2 327.4,213.1 Q330.2,209.7 333.8,212.3 Q337.0,209.2 340.3,212.1 Q343.9,209.5 346.7,212.9 Q350.5,210.5 353.1,214.0 Q357.1,212.1 359.4,215.9 Q363.5,214.2 365.4,218.2 Q369.7,216.9 371.3,221.1 Q375.6,220.2 376.8,224.4 Q381.2,224.1 381.9,228.5 Q386.3,228.4 386.7,232.9 Q391.1,233.2 391.1,237.6 Q395.5,238.1 395.4,242.5 Q399.7,243.3 399.3,247.7 Q403.6,248.6 403.0,253.0 Q407.3,254.1 406.6,258.4 Q410.7,260.0 409.5,264.2 Q413.7,265.8 412.5,270.0 Q416.7,271.5 415.5,275.8 Q419.6,277.5 418.2,281.7 Q422.2,283.6 420.6,287.7 Q424.5,289.8 422.7,293.9 Q426.4,296.2 424.4,300.2 Q428.1,302.6 426.0,306.5 Q429.6,309.0 427.3,312.8 Q430.7,315.6 428.3,319.2 Q431.5,322.3 428.8,325.7 Q431.9,328.8 429.1,332.2 Q432.2,335.4 429.3,338.7 Q432.4,341.9 429.5,345.2 Q432.5,348.4 429.6,351.7 Q432.7,354.9 429.8,358.2 Q433.0,361.3 430.1,364.7 Q433.2,367.8 430.4,371.2 Q433.5,374.3 430.7,377.7 Q433.9,380.7 431.1,384.2 Q434.3,387.2 431.6,390.7" fill="none" stroke="#2a2018" stroke-width="0.8"/>
<path d="M284.2,257.4 Q281.9,253.3 286.1,251.1 Q283.7,247.1 287.9,244.9 Q286.1,240.6 290.5,239.0 Q289.2,234.5 293.8,233.4 Q292.9,228.7 297.6,228.1 Q297.3,223.4 302.0,223.3 Q302.4,218.6 307.1,219.3 Q308.0,214.7 312.6,215.8 Q313.9,211.3 318.3,212.9 Q320.4,208.6 324.5,210.9 Q326.9,206.8 330.8,209.4 Q333.6,205.7 337.3,208.6 Q340.7,205.5 343.7,209.1 Q347.4,206.2 350.2,210.0 Q354.0,207.3 356.5,211.3 Q360.7,209.0 362.7,213.3 Q367.0,211.4 368.7,215.8 Q373.1,214.3 374.4,218.8 Q379.0,217.6 380.0,222.2 Q384.7,221.7 385.0,226.3 Q389.7,226.1 389.7,230.8 Q394.4,230.9 394.2,235.6 Q398.9,235.7 398.4,240.4 Q403.1,241.0 402.4,245.6 Q407.0,246.3 406.1,250.9 Q410.8,251.7 409.7,256.3 Q414.2,257.7 412.7,262.1 Q417.2,263.5 415.6,267.9 Q420.1,269.3 418.5,273.7 Q423.0,275.3 421.2,279.6 Q425.6,281.4 423.6,285.7 Q427.9,287.6 425.8,291.8 Q429.9,294.1 427.4,298.1 Q431.4,300.5 428.9,304.4 Q432.9,306.9 430.2,310.8 Q434.1,313.4 431.4,317.2 Q435.0,320.2 431.8,323.7 Q435.4,326.7 432.2,330.2 Q435.7,333.3 432.3,336.7 Q435.8,339.8 432.5,343.2 Q435.9,346.4 432.6,349.7 Q436.0,352.8 432.7,356.1 Q436.2,359.3 432.9,362.6 Q436.5,365.7 433.2,369.1 Q436.7,372.3 433.5,375.6 Q437.0,378.7 433.7,382.1 Q437.4,385.1 434.2,388.6" fill="none" stroke="#2a2018" stroke-width="0.8"/>
<g fill="none" stroke="#2b2622" stroke-width="0.8">
<path d="M333,172.2 L404.1,217.5"/>
<path d="M347,172.2 L403.4,207.3"/>
<path d="M358.5,172.2 L403.4,200.5"/>
<path d="M375,172.2 L403.4,190.9"/>
<path d="M419.5,172.5 L403.4,187.5 L403.4,227.7 L418.4,234.5 L418.4,262"/>
<path d="M434.1,172.5 L410.2,190.9 L410.2,222.3 L425.9,229 L425.9,280"/>
<path d="M412.3,222.3 L468.2,188.2"/>
<path d="M419.5,226.4 L468.2,196.4"/>
<path d="M425.9,238.6 L468.2,213.4"/>
<path d="M426.5,263.2 L468.2,239.3"/>
<path d="M455.9,265 L468.2,259"/>
<path d="M463.4,172.5 L463.4,188.2 L468.2,186"/>
<path d="M418.3,255.0 L419.0,268.1 L420.7,279.3 L425.5,281.2 L432.7,282.8 L435.4,291.7 L436.7,315.4 L452.4,325.9 L459.0,316.7 L466.9,312.7"/>
<path d="M425.5,255.0 L426.2,279.3"/>
<path d="M435.4,283.2 L443.2,272.1 L466.9,262.9"/>
<path d="M432.7,286.5 L424.9,284.5 L423.6,289.1 L427.5,307.5"/>
<path d="M452.4,325.9 L457.7,333.7 L460.3,355.0"/>
<path d="M455.1,320.6 L461.6,328.5 L462.3,355.0"/>
<path d="M466.9,312.7 L466.9,355.0"/>
<path d="M431.1,340.0 L432.8,368.9 L428.5,373.5 L427.6,389.1 L429.9,393.7 L432.8,412.2 L432.0,418.7"/>
<path d="M427.6,389.1 L434.3,388.4 L440.1,395.2 L441.5,412.2 L442.9,415.4"/>
<path d="M458.5,340.0 L459.4,351.6 L461.7,368.9 L462.9,381.9"/>
<path d="M462.9,383.3 L452.8,383.3 L451.8,389.1 L453.1,395.6 L457.4,402.4 L462.9,406.7"/>
<path d="M446.3,410.8 L446.3,432.4"/>
<path d="M451.3,410.8 L453.1,415.4 L462.9,418.3"/>
<path d="M422.4,419.0 L442.9,416.8"/>
<path d="M430.4,421.6 L436.9,421.2 L437.2,426.4 L430.7,426.9 Z"/>
<path d="M426.0,434.2 L467.2,432.7"/>
<path d="M421.0,433.7 L467.2,432.3"/>
<path d="M428.9,437.3 L444.8,437.0 L444.8,448.2 L428.9,448.4 Z"/>
<path d="M451.3,435.9 L462.9,435.6 L462.9,446.7 L451.3,447.0 Z"/>
<path d="M446.3,420.0 L446.7,469.1" stroke-width="1"/>
<path d="M426.0,454.7 L464.3,456.1"/>
<path d="M434.0,457.8 L442.7,457.8 L442.7,467.7 L434.0,467.7"/>
<path d="M439.8,469.8 L467.2,469.1" stroke-dasharray="2 1"/>
<path d="M441.2,485.7 L467.2,487.9"/>
<path d="M453.1,469.8 L453.9,587.1" stroke-width="1.2"/>
<path d="M455.6,469.8 L455.9,587.1" stroke-width="1"/>
<path d="M440.1,469.8 L441.5,529.7 L444.8,587.1" stroke-width="1"/>
<path d="M444.1,587.1 L467.2,587.1"/>
<path d="M441.9,592.2 L467.2,592.2"/>
<path d="M434.7,597.3 L467.2,597.3"/>
<path d="M451.3,597.3 L451.3,605.2"/>
<path d="M434.7,605.2 L467.2,605.2"/>
</g>
</g>
<g fill="none" stroke="#2f2c27" stroke-width="0.8">
<path d="M295,620.6 L380,609.9 L435,604.8"/>
<path d="M295,631.6 L384.7,618.8 L427.7,613.5 L468.3,606.8"/>
<path d="M384.7,618.8 L370,675.7"/>
<path d="M329.6,675.7 L390,664.7 L433.3,656.4"/>
<path d="M427.7,613.5 L436,675.7"/>
<path d="M455.3,609 L468.3,637"/>
<path d="M295,549 L441,549"/>
</g>

</g>
</svg>
</body></html>
